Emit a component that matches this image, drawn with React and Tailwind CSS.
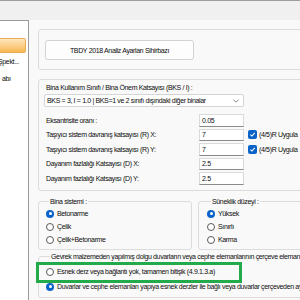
import React from "react";

function Radio({ checked }) {
  return checked ? (
    <span className="w-[8px] h-[8px] rounded-full bg-[#0a63c9] flex items-center justify-center shrink-0">
      <span className="w-[3px] h-[3px] rounded-full bg-white" />
    </span>
  ) : (
    <span className="w-[8px] h-[8px] rounded-full border border-[#5a5a5a] bg-white shrink-0" />
  );
}

function RadioRow({ checked, label, h = "h-[13px]" }) {
  return (
    <div className={`flex items-center gap-[3px] ${h}`}>
      <Radio checked={checked} />
      <span className="whitespace-nowrap">{label}</span>
    </div>
  );
}

function Check() {
  return (
    <span className="w-[9px] h-[9px] rounded-[2px] bg-[#0a63c9] flex items-center justify-center shrink-0">
      <svg width="7" height="7" viewBox="0 0 10 10">
        <path d="M2 5.2 L4.2 7.3 L8.2 2.8" fill="none" stroke="white" strokeWidth="1.5" />
      </svg>
    </span>
  );
}

function Field({ label, value, check }) {
  return (
    <div className="flex items-center h-[12.5px]">
      <span className="w-[155px] pl-[2px] whitespace-nowrap">{label}</span>
      <div className="w-[45px] h-[12.5px] bg-white border border-[#dadada] border-b-[#8a8a8a] flex items-center pl-[2px]">
        {value}
      </div>
      {check && (
        <div className="flex items-center ml-[4px] gap-[2px]">
          <Check />
          <span className="whitespace-nowrap">(4/5)R Uygula</span>
        </div>
      )}
    </div>
  );
}

export default function App() {
  return (
    <div className="w-[300px] h-[300px] overflow-hidden bg-[#f0f0f0] relative text-[7px] leading-[9px] text-[#0d0d0d] font-['Liberation_Sans',Arial,sans-serif] tracking-[-0.35px]">
      <div className="h-px bg-[#a19b9b]" />
      <div className="h-[19px]" />
      <div className="flex h-[280px]">
        <div className="w-[29px] shrink-0 bg-white border-t border-r border-[#9b9b9b] overflow-hidden">
          <div className="h-[17px]" />
          <div className="w-[26px] h-[15px] rounded-r-[2px] border border-l-0 border-[#e8ac55] bg-gradient-to-b from-[#fde6bb] to-[#f8b84f]" />
          <div className="mt-[4px] h-[9px] ml-[-2px] whitespace-nowrap">Şpekt...</div>
          <div className="mt-[8px] h-[9px] ml-[2px] whitespace-nowrap">abı</div>
        </div>
        <div className="flex-1 bg-[#f9f9f9] pl-[9px] pt-[9px] overflow-hidden">
          <div className="w-[320px]">
            <div className="h-[41px] border border-[#dcdcdc] rounded-[3px] pl-[6px] pt-[10px]">
              <div className="w-[149px] h-[20px] bg-[#fdfdfd] border border-[#d3d3d3] rounded-[3px] flex items-center justify-center">
                TBDY 2018 Analiz Ayarları Sihirbazı
              </div>
            </div>
            <div className="mt-[9px] h-[112px] border border-[#dcdcdc] rounded-[3px] pl-[5px] pt-[3px]">
              <div className="pl-[2px] h-[9px] whitespace-nowrap">Bina Kullanım Sınıfı / Bina Önem Katsayısı (BKS / I) :</div>
              <div className="mt-[2px] w-[200px] h-[13px] bg-white border border-[#d5d5d5] rounded-[2px] flex items-center justify-between pl-[2px] pr-[4px]">
                <span className="whitespace-nowrap">BKS = 3, I = 1.0 | BKS=1 ve 2 sınıfı dışındaki diğer binalar</span>
                <svg width="6" height="4" viewBox="0 0 6 4">
                  <path d="M0.5 0.8 L3 3.2 L5.5 0.8" fill="none" stroke="#6a6a6a" strokeWidth="0.8" />
                </svg>
              </div>
              <div className="mt-[7px] flex flex-col gap-[2px]">
                <Field label="Eksantrisite oranı :" value="0.05" />
                <Field label="Taşıyıcı sistem davranış katsayısı (R) X:" value="7" check />
                <Field label="Taşıyıcı sistem davranış katsayısı (R) Y:" value="7" check />
                <Field label="Dayanım fazlalığı Katsayısı (D) X:" value="2.5" />
                <Field label="Dayanım fazlalığı Katsayısı (D) Y:" value="2.5" />
              </div>
            </div>
            <div className="mt-[6px] flex gap-[6px]">
              <fieldset className="w-[154px] h-[53px] border border-[#dcdcdc] rounded-[3px] pl-[7px] pt-[1px]">
                <legend className="ml-[3px] px-[1px] leading-[9px]">Bina sistemi :</legend>
                <RadioRow checked label="Betonarme" />
                <RadioRow label="Çelik" />
                <RadioRow label="Çelik+Betonarme" />
              </fieldset>
              <fieldset className="flex-1 h-[53px] border border-[#dcdcdc] rounded-[3px] pl-[8px] pt-[1px]">
                <legend className="ml-[4px] px-[1px] leading-[9px]">Süneklik düzeyi :</legend>
                <RadioRow checked label="Yüksek" />
                <RadioRow label="Sınırlı" />
                <RadioRow label="Karma" />
              </fieldset>
            </div>
            <fieldset className="mt-[2px] h-[46px] border border-[#dcdcdc] rounded-[3px] pl-[7px] pt-[3px]">
              <legend className="ml-[4px] px-[1px] leading-[9px] whitespace-nowrap">Gevrek malzemeden yapılmış dolgu duvarların veya cephe elemanlarının çerçeve elemanlarına</legend>
              <RadioRow label="Esnek derz veya bağlantı yok, tamamen bitişik (4.9.1.3.a)" h="h-[15px]" />
              <RadioRow checked label="Duvarlar ve cephe elemanları yapıya esnek derzler ile bağlı veya duvarlar çerçeveden ayrık (4.9.1.3.b)" h="h-[15px]" />
            </fieldset>
          </div>
        </div>
      </div>
      <div className="absolute left-[36px] top-[262px] w-[206px] h-[21px] border-[3px] border-[#22ab4b]" />
    </div>
  );
}
